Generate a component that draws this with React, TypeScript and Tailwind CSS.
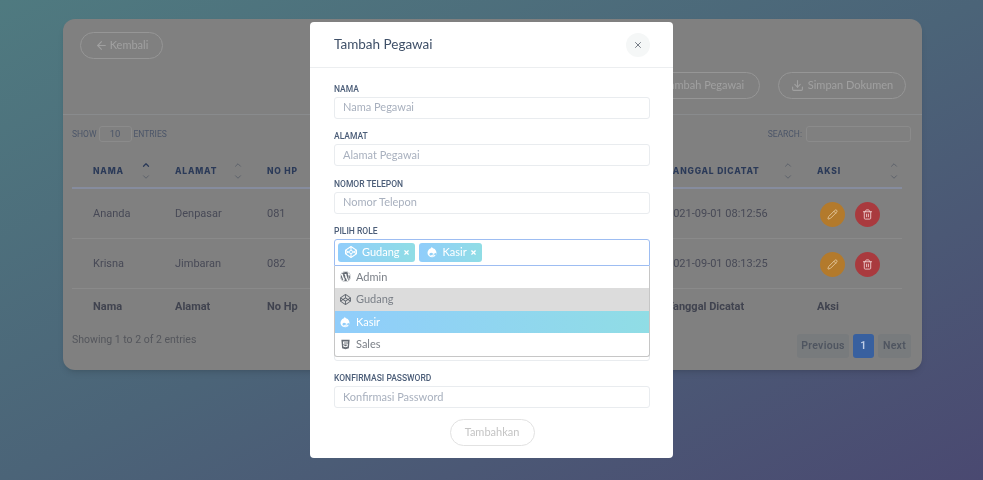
import { ArrowLeft, ChevronDown, ChevronUp, Download, Pencil, Plus, Trash2, X } from "lucide-react";
import { FaCodepen, FaDrupal, FaHtml5, FaWordpress } from "react-icons/fa";

const grid = "grid grid-cols-[82px_92px_400px_150px_106px]";

function Sort({ active = false }: { active?: boolean }) {
  return (
    <span className="flex flex-col items-center">
      <ChevronUp size={10} strokeWidth={active ? 3 : 2} className={active ? "text-[#2b3a58]" : "text-[#555c66]"} />
      <span className="h-[2px]" />
      <ChevronDown size={10} strokeWidth={2} className="text-[#555c66]" />
    </span>
  );
}

function Head({ label }: { label: string }) {
  return (
    <div className="flex items-center justify-between pr-[3px] pb-[7px] pl-[21px] text-[8.5px] font-extrabold tracking-[0.8px] text-[#2b3a58]">
      <span>{label}</span>
      <Sort active={label === "NAMA"} />
    </div>
  );
}

function Row({ n, a, p, d }: { n: string; a: string; p: string; d: string }) {
  return (
    <div className={`${grid} h-[50px] items-center border-b border-[#8a8a8a] pt-[1px] text-[11px] text-[#474956]`}>
      <div className="pl-[21px]">{n}</div>
      <div className="pl-[21px]">{a}</div>
      <div className="pl-[21px]">{p}</div>
      <div className="pl-[21px]">{d}</div>
      <div className="flex gap-[10px] pl-[24px]">
        <span className="flex h-[25px] w-[25px] items-center justify-center rounded-full bg-[#b37a2c]">
          <Pencil size={11} className="text-[#e3c79c]" />
        </span>
        <span className="flex h-[25px] w-[25px] items-center justify-center rounded-full bg-[#a93a3e]">
          <Trash2 size={11} className="text-[#eccaca]" />
        </span>
      </div>
    </div>
  );
}

function Field({ label, placeholder }: { label: string; placeholder: string }) {
  return (
    <div>
      <div className="h-[13px] font-['Roboto',sans-serif] text-[8.5px] leading-[13px] font-medium text-[#4b5d78]">{label}</div>
      <div className="mt-[1px] flex h-[22px] items-center rounded-[3px] border border-[#e9ecef] pl-[8px] text-[11px] text-[#a8b0be]">
        {placeholder}
      </div>
    </div>
  );
}

function Chip({ icon, label }: { icon: React.ReactNode; label: string }) {
  return (
    <span className="flex h-[19px] items-center rounded-[3px] bg-linear-to-r from-[#90cdfb] to-[#90dde5] pr-[5px] pl-[7px] text-[11px] text-white">
      {icon}
      <span className="mr-[3px] ml-[5px]">{label}</span>
      <X size={7} strokeWidth={4} />
    </span>
  );
}

function Option({ icon, label, cls }: { icon: React.ReactNode; label: string; cls: string }) {
  return (
    <div className={`flex h-[22.5px] items-center gap-[5px] pl-[4px] text-[11px] ${cls}`}>
      <span className="flex w-[12px] justify-center">{icon}</span>
      {label}
    </div>
  );
}

export default function App() {
  return (
    <div className="relative h-[480px] w-[983px] overflow-hidden bg-linear-to-br from-[#4f7a80] via-[#4b6478] to-[#4a4971] pt-[19px] pl-[63px] font-['Roboto',sans-serif]">
      <div className="flex h-[351px] w-[859px] flex-col rounded-[12px] bg-[#808080] shadow-md blur-[0.5px]">
        <div className="h-[96px] shrink-0 border-b border-[#898b8d] pt-[13px] pr-[16px] pl-[17px] font-['Lato',sans-serif]">
          <button className="flex h-[27px] w-[83px] items-center justify-center gap-[2px] rounded-full border border-[#969696] text-[11px] text-[#a0a0a0]">
            <ArrowLeft size={13} /> Kembali
          </button>
          <div className="mt-[13px] flex justify-end gap-[18px]">
            <button className="flex h-[27px] w-[128px] items-center justify-center gap-[4px] rounded-full border border-[#969696] text-[11px] text-[#a0a0a0]">
              <Plus size={12} /> Tambah Pegawai
            </button>
            <button className="flex h-[27px] w-[128px] items-center justify-center gap-[4px] rounded-full border border-[#969696] text-[11px] text-[#a0a0a0]">
              <Download size={13} /> Simpan Dokumen
            </button>
          </div>
        </div>
        <div className="flex h-[45px] shrink-0 items-start justify-between pt-[11px] pr-[11px] pl-[9px] text-[8.5px] text-[#4b5568]">
          <div className="flex items-center gap-[2px]">
            SHOW
            <span className="flex h-[16px] w-[33px] items-center justify-center rounded-[3px] border border-[#8b8b8b] text-[9.5px]">10</span>
            ENTRIES
          </div>
          <div className="flex items-center gap-[4px]">
            SEARCH:
            <span className="h-[16px] w-[105px] rounded-[3px] border border-[#8b8b8b]" />
          </div>
        </div>
        <div className="ml-[9px] w-[830px]">
          <div className={`${grid} h-[29px] border-b-2 border-[#868c9e] font-['Inter',sans-serif]`}>
            <Head label="NAMA" />
            <Head label="ALAMAT" />
            <Head label="NO HP" />
            <Head label="TANGGAL DICATAT" />
            <Head label="AKSI" />
          </div>
          <Row n="Ananda" a="Denpasar" p="081" d="2021-09-01 08:12:56" />
          <Row n="Krisna" a="Jimbaran" p="082" d="2021-09-01 08:13:25" />
          <div className={`${grid} h-[37px] items-center text-[11px] font-bold text-[#40434f]`}>
            <div className="pl-[21px]">Nama</div>
            <div className="pl-[21px]">Alamat</div>
            <div className="pl-[21px]">No Hp</div>
            <div className="pl-[21px]">Tanggal Dicatat</div>
            <div className="pl-[21px]">Aksi</div>
          </div>
        </div>
        <div className="mt-[8px] flex items-start justify-between pr-[11px] pl-[9px] text-[10.5px] text-[#54565c]">
          <span className="leading-[12px]">Showing 1 to 2 of 2 entries</span>
          <div className="flex gap-[4px] text-[10.5px] font-semibold tracking-[0.3px] text-[#4f5560]">
            <span className="flex h-[24px] w-[52px] items-center justify-center rounded-[3px] bg-[#787b7d]">Previous</span>
            <span className="flex h-[24px] w-[21px] items-center justify-center rounded-[3px] bg-[#38609f] text-[#c0cee6]">1</span>
            <span className="flex h-[24px] w-[33px] items-center justify-center rounded-[3px] bg-[#787b7d]">Next</span>
          </div>
        </div>
      </div>

      <div className="absolute top-[22px] left-[310px] h-[436px] w-[363px] rounded-[4px] bg-white font-['Lato',sans-serif] blur-[0.3px]">
        <div className="flex h-[46px] items-center justify-between border-b border-[#eceef0] pr-[23px] pl-[24px]">
          <span className="text-[13.5px] text-[#3f5068]">Tambah Pegawai</span>
          <span className="flex h-[24px] w-[24px] items-center justify-center rounded-full bg-[#f5f7f7]">
            <X size={10} className="text-[#5b6470]" />
          </span>
        </div>
        <div className="flex flex-col pt-[14.5px] pr-[23px] pl-[24px]">
          <div className="flex flex-col gap-[11.5px]">
            <Field label="NAMA" placeholder="Nama Pegawai" />
            <Field label="ALAMAT" placeholder="Alamat Pegawai" />
            <Field label="NOMOR TELEPON" placeholder="Nomor Telepon" />
            <div>
              <div className="h-[13px] font-['Roboto',sans-serif] text-[8.5px] leading-[13px] font-medium text-[#4b5d78]">PILIH ROLE</div>
              <div className="relative mt-[0.5px]">
                <div className="flex h-[27px] items-center gap-[4px] rounded-t-[3px] border border-[#9dbdf2] pl-[3px]">
                  <Chip icon={<FaCodepen size={12} />} label="Gudang" />
                  <Chip icon={<FaDrupal size={12} />} label="Kasir" />
                </div>
                <div className="absolute top-[27px] right-0 left-0 z-10 h-[91px] rounded-b-[3px] border border-t-0 border-[#c6c6c6] bg-white text-[#7b8088]">
                  <Option icon={<FaWordpress size={11} className="text-[#666c74]" />} label="Admin" cls="" />
                  <Option icon={<FaCodepen size={11} className="text-[#666c74]" />} label="Gudang" cls="bg-[#dcdcdc]" />
                  <Option icon={<FaDrupal size={12} />} label="Kasir" cls="bg-linear-to-r from-[#90cdfb] to-[#90dde5] text-white" />
                  <Option icon={<FaHtml5 size={11} className="text-[#666c74]" />} label="Sales" cls="" />
                </div>
              </div>
            </div>
            <Field label="USERNAME" placeholder="Username" />
            <Field label="PASSWORD" placeholder="Password" />
            <Field label="KONFIRMASI PASSWORD" placeholder="Konfirmasi Password" />
          </div>
          <button className="mx-auto mt-[10.5px] flex h-[27px] w-[85px] items-center justify-center rounded-full border border-[#e2e2e2] text-[11px] text-[#c4c4c4]">
            Tambahkan
          </button>
        </div>
      </div>
    </div>
  );
}
